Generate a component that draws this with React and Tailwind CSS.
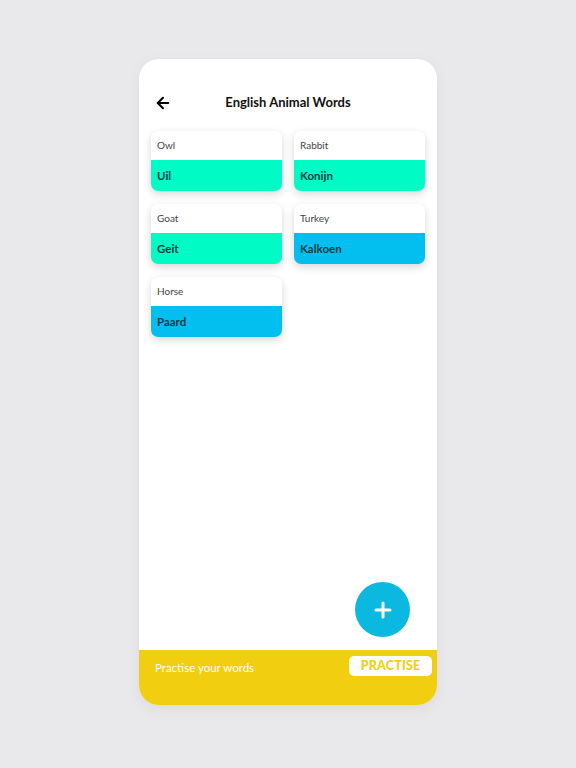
import { ArrowLeft, Plus } from 'lucide-react';

const words = [
  { en: 'Owl', nl: 'Uil', tone: 'green' },
  { en: 'Rabbit', nl: 'Konijn', tone: 'green' },
  { en: 'Goat', nl: 'Geit', tone: 'green' },
  { en: 'Turkey', nl: 'Kalkoen', tone: 'blue' },
  { en: 'Horse', nl: 'Paard', tone: 'blue' },
];

function WordCard({ word }) {
  return (
    <div className="overflow-hidden rounded-[7px] bg-white shadow-[0_3px_8px_rgba(0,0,0,.16)]">
      <div className="flex h-[29px] items-center px-[6px] text-[10px] text-[#444]">{word.en}</div>
      <div
        className={`flex h-[31px] items-center px-[6px] text-[11.5px] font-bold text-[#123a44] ${
          word.tone === 'green' ? 'bg-[#00fbc5]' : 'bg-[#02bff0]'
        }`}
      >
        {word.nl}
      </div>
    </div>
  );
}

export default function App() {
  return (
    <div className="flex h-[768px] w-[576px] items-start justify-center bg-[#e9e8ea] pt-[59px] font-['Lato',sans-serif]">
      <div className="flex h-[646px] w-[298px] flex-col overflow-hidden rounded-[20px] bg-white shadow-[0_4px_14px_rgba(0,0,0,.06)]">
        <div className="flex-1 px-[12px] pt-[35px]">
          <header className="relative flex h-[18px] items-center justify-center">
            <ArrowLeft size={18} strokeWidth={2.6} className="absolute left-[3px] text-black" />
            <h1 className="text-[13px] font-bold text-[#111]">English Animal Words</h1>
          </header>

          <div className="mt-[19px] grid grid-cols-2 gap-x-[12px] gap-y-[13px]">
            {words.map((w) => (
              <WordCard key={w.en} word={w} />
            ))}
          </div>
        </div>

        <div className="flex justify-end pb-[13px] pr-[27px]">
          <button
            type="button"
            className="flex h-[55px] w-[55px] items-center justify-center rounded-full bg-[#0ab8e0] text-white"
          >
            <Plus size={24} strokeWidth={3} />
          </button>
        </div>

        <footer className="flex h-[55px] items-start justify-between bg-[#f2ce11] pl-[16px] pr-[5px] pt-[6px]">
          <p className="mt-[3px] text-[11.5px] text-white">Practise your words</p>
          <button
            type="button"
            className="flex h-[20px] w-[83px] items-center justify-center rounded-[5px] bg-white text-[12.5px] font-black tracking-[0.2px] text-[#f2ce11]"
          >
            PRACTISE
          </button>
        </footer>
      </div>
    </div>
  );
}
